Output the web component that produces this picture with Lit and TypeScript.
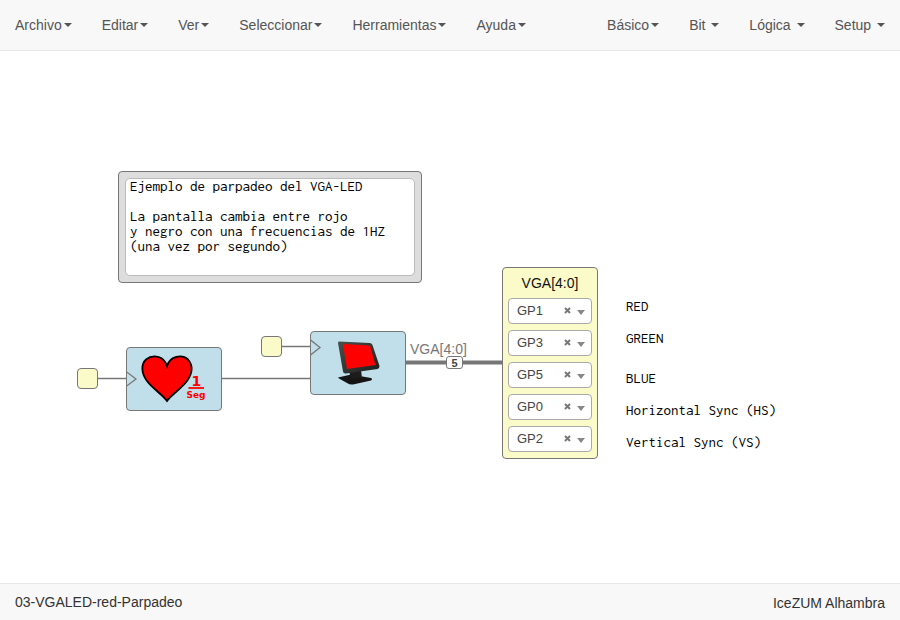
import { LitElement, html, css, svg } from "lit";
import { customElement, property } from "lit/decorators.js";
import { styleMap } from "lit/directives/style-map.js";

interface MenuItem {
  label: string;
  spaced?: boolean;
}

const LEFT_MENU: MenuItem[] = [
  { label: "Archivo" },
  { label: "Editar" },
  { label: "Ver" },
  { label: "Seleccionar" },
  { label: "Herramientas" },
  { label: "Ayuda" },
];

const RIGHT_MENU: MenuItem[] = [
  { label: "Básico" },
  { label: "Bit", spaced: true },
  { label: "Lógica", spaced: true },
  { label: "Setup", spaced: true },
];

const PINS = ["GP0", "GP1", "GP2", "GP3", "GP4", "GP5", "GP6", "GP7"];

const NOTE = `Ejemplo de parpadeo del VGA-LED

La pantalla cambia entre rojo
y negro con una frecuencias de 1HZ
(una vez por segundo)`;

const LABELS = [
  { text: "RED", x: 626, y: 248 },
  { text: "GREEN", x: 626, y: 280 },
  { text: "BLUE", x: 626, y: 320 },
  { text: "Horizontal Sync (HS)", x: 626, y: 352 },
  { text: "Vertical Sync (VS)", x: 626, y: 384 },
];

const at = (x: number, y: number) => styleMap({ left: `${x}px`, top: `${y}px` });

@customElement("nav-menu")
class NavMenu extends LitElement {
  @property({ attribute: false }) items: MenuItem[] = [];

  static styles = css`
    .menu {
      display: flex;
      margin: 0;
      padding: 0;
      list-style: none;
    }
    .item {
      display: flex;
      align-items: center;
      padding: 15px;
      border: 0;
      background: none;
      color: #555;
      font: 14px/20px "Liberation Sans", Arial, sans-serif;
      white-space: pre;
      cursor: pointer;
    }
    .caret {
      margin-left: 2px;
      border-top: 4px solid;
      border-right: 4px solid transparent;
      border-left: 4px solid transparent;
    }
  `;

  render() {
    return html`<ul class="menu">
      ${this.items.map(
        (item) => html`<li>
          <button class="item" type="button" aria-haspopup="true">${item.label}${item.spaced ? " " : ""}<span class="caret"></span></button>
        </li>`
      )}
    </ul>`;
  }
}

@customElement("pin-select")
class PinSelect extends LitElement {
  @property() value = "";
  @property() label = "";

  static styles = css`
    :host {
      display: block;
    }
    .field {
      position: relative;
      display: grid;
    }
    .select {
      appearance: none;
      box-sizing: border-box;
      width: 100%;
      height: 26px;
      margin: 0;
      padding: 0 28px 2px 8px;
      border: 1px solid #aaa;
      border-radius: 4px;
      background: #fff;
      color: #444;
      font: 13px "Liberation Sans", Arial, sans-serif;
    }
    .clear {
      position: absolute;
      top: 9px;
      right: 21px;
      width: 7px;
      height: 7px;
      padding: 0;
      border: 0;
      background: none;
    }
    .cross {
      display: block;
      width: 7px;
      height: 7px;
      fill: none;
      stroke: #777;
      stroke-width: 2;
    }
    .arrow {
      position: absolute;
      top: 12px;
      right: 7px;
      border-top: 5px solid #888;
      border-right: 4px solid transparent;
      border-left: 4px solid transparent;
      pointer-events: none;
    }
  `;

  render() {
    return html`<div class="field">
      <select class="select" aria-label=${this.label}>
        ${PINS.map((pin) => html`<option ?selected=${pin === this.value}>${pin}</option>`)}
      </select>
      <button class="clear" type="button" aria-label="Quitar ${this.value}">
        <svg class="cross" viewBox="0 0 7 7"><path d="M1 1 L6 6 M6 1 L1 6" /></svg>
      </button>
      <span class="arrow"></span>
    </div>`;
  }
}

@customElement("app-root")
class AppRoot extends LitElement {
  static styles = css`
    :host {
      display: flex;
      flex-direction: column;
      min-height: 100vh;
      background: #fff;
      color: #333;
      font: 14px/20px "Liberation Sans", Arial, sans-serif;
    }
    .navbar {
      display: flex;
      justify-content: space-between;
      border-bottom: 1px solid #e7e7e7;
      background: #f8f8f8;
    }
    .canvas {
      position: relative;
      flex: 1;
      overflow: hidden;
    }
    .wires {
      position: absolute;
      inset: 0;
      width: 100%;
      height: 100%;
    }
    .node {
      position: absolute;
      box-sizing: border-box;
      border: 1px solid #777;
      border-radius: 4px;
    }
    .clock {
      width: 21px;
      height: 21px;
      background: #fbfac9;
    }
    .block {
      width: 96px;
      height: 64px;
      background: #c1dfea;
    }
    .art {
      display: block;
      width: 94px;
      height: 62px;
    }
    .note {
      width: 304px;
      padding: 6px;
      background: #ddd;
    }
    .mono {
      font: 15px/15px Inconsolata, "Noto Sans Mono CJK SC", monospace;
      color: #000;
    }
    .text {
      display: block;
      box-sizing: border-box;
      width: 100%;
      height: 98px;
      margin: 0;
      padding: 0 4px;
      border: 1px solid #bbb;
      border-radius: 5px;
      background: #fff;
      resize: none;
      white-space: pre;
      overflow: hidden;
    }
    .label {
      position: absolute;
      white-space: pre;
    }
    .output {
      width: 96px;
      padding: 5px;
      background: #fbfac9;
    }
    .title {
      margin: 0 0 5px;
      color: #111;
      font: 14px/20px "Liberation Sans", Arial, sans-serif;
      text-align: center;
    }
    .pins {
      display: grid;
      gap: 6px;
      padding-bottom: 1px;
    }
    .bus-name {
      position: absolute;
      color: #777;
    }
    .bus-size {
      position: absolute;
      box-sizing: border-box;
      width: 17px;
      height: 13px;
      border: 1px solid #777;
      border-radius: 3px;
      background: #fff;
      color: #444;
      font: bold 11px/12px "Liberation Sans", Arial, sans-serif;
      text-align: center;
    }
    .footer {
      display: flex;
      justify-content: space-between;
      padding: 8px 15px;
      border-top: 1px solid #e7e7e7;
      background: #f8f8f8;
    }
    .board {
      padding-top: 1px;
      margin-bottom: -1px;
    }
    .unit {
      font: bold 9px "DejaVu Sans", sans-serif;
      fill: #f00;
    }
    .count {
      font: bold 14px "DejaVu Sans", sans-serif;
      fill: #f00;
    }
  `;

  private heart() {
    return svg`
      <path d="M-1 23.500 L9 31 L-1 38.500" fill="none" stroke="#777" stroke-width="1.300" />
      <path d="M40 53 C36 47 26 41 20 33 C14 25 14 16 19 11.500 C26 6 37 8 40 18 C43 8 55 6 61 11.500 C66 17 66 25 60 33 C54 41 44 47 40 53 Z"
        fill="#f00" stroke="#000" stroke-width="1.800" />
      <text class="count" x="64.500" y="38">1</text>
      <path d="M61.500 40 H77" stroke="#f00" stroke-width="1.800" />
      <text class="unit" x="59.500" y="50">Seg</text>`;
  }

  private monitor() {
    return svg`
      <defs>
        <linearGradient id="bezel" x1="0" y1="0" x2="1" y2="1">
          <stop offset="0" stop-color="#4a504c" />
          <stop offset="1" stop-color="#1c1e1c" />
        </linearGradient>
      </defs>
      <path d="M-1 7.500 L9 15.500 L-1 23.500" fill="none" stroke="#777" stroke-width="1.300" />
      <path d="M27 45.500 L40 42.500 L60 46 Q62 47 60 48.500 L42 52.500 Q39 53 36 51 L28 46.500 Z" fill="#141414" />
      <path d="M38 39 L50 38 L51 46 L40 47 Z" fill="#1c1c1c" />
      <path d="M28 9.500 L59 11 Q61 11.500 61.500 13 L68.500 34 Q68.500 36.500 66.500 37 L35 41.500 Q32.500 42 32 39.500 L27 11 Q27 9.500 28 9.500 Z" fill="url(#bezel)" />
      <path d="M32 12 L59 13.500 L64.500 33 L36 37 Z" fill="#f00" />`;
  }

  render() {
    return html`
      <nav class="navbar">
        <nav-menu .items=${LEFT_MENU}></nav-menu>
        <nav-menu .items=${RIGHT_MENU}></nav-menu>
      </nav>

      <main class="canvas">
        <svg class="wires" aria-hidden="true" fill="none" stroke="#777">
          <path d="M98 327.500 H126 M222 327.500 H310 M282 295.500 H310" stroke-width="1.500" />
          <path d="M406 311.500 H502" stroke-width="4" />
        </svg>

        <div class="node note" style=${at(118, 120)}>
          <textarea class="mono text" aria-label="Comentario" spellcheck="false" .value=${NOTE}></textarea>
        </div>

        <div class="node clock" style=${at(77, 317)}></div>
        <div class="node clock" style=${at(261, 285)}></div>

        <div class="node block" style=${at(126, 296)}>
          <svg class="art" viewBox="0 0 94 62">${this.heart()}</svg>
        </div>
        <div class="node block" style=${at(310, 280)}>
          <svg class="art" viewBox="0 0 94 62">${this.monitor()}</svg>
        </div>

        <span class="bus-name" style=${at(410, 288)}>VGA[4:0]</span>
        <span class="bus-size" style=${at(446, 305)}>5</span>

        <section class="node output" style=${at(502, 216)}>
          <h2 class="title">VGA[4:0]</h2>
          <div class="pins">
            ${["GP1", "GP3", "GP5", "GP0", "GP2"].map(
              (pin, i) => html`<pin-select value=${pin} label="VGA[${4 - i}]"></pin-select>`
            )}
          </div>
        </section>

        ${LABELS.map((l) => html`<span class="mono label" style=${at(l.x, l.y)}>${l.text}</span>`)}
      </main>

      <footer class="footer">
        <span>03-VGALED-red-Parpadeo</span>
        <span class="board">IceZUM Alhambra</span>
      </footer>
    `;
  }
}
